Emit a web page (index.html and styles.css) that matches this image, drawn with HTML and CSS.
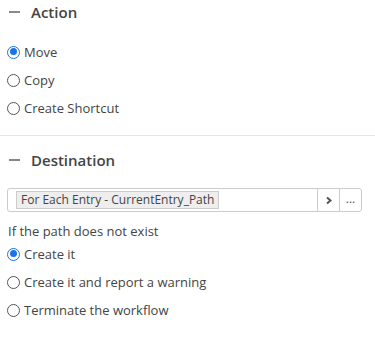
FILE: index.html
```html
<!DOCTYPE html>
<html>
<head>
<meta charset="utf-8">
<link rel="stylesheet" href="styles.css">
</head>
<body>
<section class="section">
  <div class="section-head"><span class="dash"></span><span class="title">Action</span></div>
  <div class="options">
    <label class="opt"><span class="radio checked"></span>Move</label>
    <label class="opt"><span class="radio"></span>Copy</label>
    <label class="opt"><span class="radio"></span>Create Shortcut</label>
  </div>
</section>
<section class="section second">
  <div class="section-head"><span class="dash"></span><span class="title">Destination</span></div>
  <div class="field">
    <div class="field-main"><span class="tag">For Each Entry - CurrentEntry_Path</span></div>
    <div class="field-btn"><svg width="8" height="9" viewBox="0 0 8 9"><path d="M2 1.5 L5.5 4.5 L2 7.5" fill="none" stroke="#555" stroke-width="2"/></svg></div>
    <div class="field-btn dots">...</div>
  </div>
  <div class="sub">If the path does not exist</div>
  <div class="options tight">
    <label class="opt"><span class="radio checked"></span>Create it</label>
    <label class="opt"><span class="radio"></span>Create it and report a warning</label>
    <label class="opt"><span class="radio"></span>Terminate the workflow</label>
  </div>
</section>
</body>
</html>
```
FILE: styles.css
```css
* { box-sizing: border-box; }
body {
  margin: 0;
  background: #fff;
  font-family: "Open Sans", "Liberation Sans", sans-serif;
  color: #444;
  font-size: 13px;
  width: 375px;
}
.section { padding: 0 0 13px 0; }
.section.second { border-top: 1px solid #e6e6e6; }
.section-head {
  display: flex;
  align-items: center;
  height: 23px;
  padding-left: 9px;
}
.second .section-head { height: 48px; }
.dash {
  width: 11px;
  height: 2px;
  background: #888;
  margin-right: 11px;
}
.title {
  font-size: 15px;
  font-weight: 600;
  color: #444;
}
.options {
  display: flex;
  flex-direction: column;
  padding-left: 7px;
  padding-top: 15px;
}
.opt {
  display: flex;
  align-items: center;
  height: 28px;
  color: #444;
}
.radio {
  width: 13px;
  height: 13px;
  border: 1px solid #555;
  border-radius: 50%;
  margin-right: 4px;
  position: relative;
  background: #fff;
}
.radio.checked {
  border: 1.5px solid #1a73e8;
}
.radio.checked::after {
  content: "";
  position: absolute;
  left: 1.5px; top: 1.5px;
  width: 7px; height: 7px;
  border-radius: 50%;
  background: #1a73e8;
}
.field {
  display: flex;
  margin: 4px 13px 0 7px;
  height: 24px;
  border: 1px solid #ccc;
  border-radius: 3px;
}
.field-main {
  flex: 1;
  display: flex;
  align-items: center;
  padding-left: 8px;
}
.tag {
  background: #eee;
  border: 1px solid #ccc;
  font-size: 12px;
  line-height: 16px;
  padding: 0 4px;
  color: #444;
}
.field-btn {
  width: 22px;
  border-left: 1px solid #ccc;
  display: flex;
  align-items: center;
  justify-content: center;
}
.dots {
  font-size: 12px;
  color: #555;
  padding-bottom: 4px;
}
.sub {
  padding: 10px 0 0 8px;
  font-size: 13px;
  color: #444;
}
.options.tight { padding-top: 0; margin-top: 0; }
```
